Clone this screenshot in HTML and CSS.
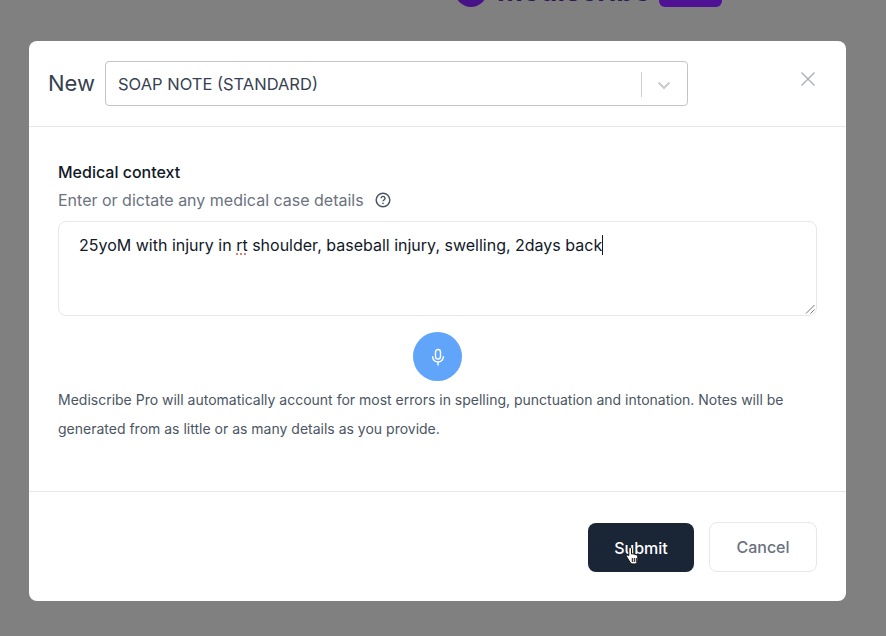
FILE: index.html
```html
<!DOCTYPE html>
<html lang="en">
<head>
<meta charset="utf-8">
<title>Mediscribe Pro</title>
<link rel="stylesheet" href="styles.css">
</head>
<body>
<div class="brand">
  <span class="brand-mark"></span>
  <span class="brand-name">Mediscribe</span>
  <span class="brand-badge">Pro</span>
</div>
<main class="modal">
  <header class="modal-head">
    <span class="new-label">New</span>
    <div class="select">
      <span class="select-value">SOAP NOTE (STANDARD)</span>
      <span class="select-sep"></span>
      <svg class="chevron" viewBox="0 0 20 20" width="20" height="20"><path d="M4.5 7.5 10 13l5.500-5.500" fill="none" stroke="#cccccc" stroke-width="2.200"/></svg>
    </div>
    <svg class="close" viewBox="0 0 16 16" width="16" height="16"><path d="M1.500 1.500l13 13M14.500 1.500l-13 13" fill="none" stroke="#a9adb3" stroke-width="1.400"/></svg>
  </header>
  <section class="modal-body">
    <h2 class="field-title">Medical context</h2>
    <div class="field-hint">
      <span>Enter or dictate any medical case details</span>
      <svg viewBox="0 0 18 18" width="18" height="18"><circle cx="9" cy="9" r="6.800" fill="none" stroke="#4b5563" stroke-width="1.500"/><path d="M7.200 7.300a1.900 1.900 0 1 1 2.900 1.600c-.7.400-1.100.7-1.100 1.400" fill="none" stroke="#4b5563" stroke-width="1.400"/><circle cx="9" cy="12.400" r=".8" fill="#4b5563"/></svg>
    </div>
    <div class="textbox">
      <span class="typed">25yoM with injury in <span class="misspelt">rt</span> shoulder, baseball injury, swelling, 2days back</span><span class="caret"></span>
      <svg class="grip" viewBox="0 0 10 10" width="10" height="10"><path d="M1 9.500 9.500 1M5.500 9.500 9.500 5.500" stroke="#777" stroke-width="1" fill="none"/></svg>
    </div>
    <div class="mic-row">
      <span class="mic">
        <svg viewBox="0 0 24 24" width="20" height="20" fill="none" stroke="#fff" stroke-width="1.700" stroke-linecap="round"><rect x="9" y="3" width="6" height="11.500" rx="3"/><path d="M5.500 11.500a6.500 6.500 0 0 0 13 0M12 18v3.500"/></svg>
      </span>
    </div>
    <p class="note">Mediscribe Pro will automatically account for most errors in spelling, punctuation and intonation. Notes will be generated from as little or as many details as you provide.</p>
  </section>
  <footer class="modal-foot">
    <button class="btn btn-primary">Submit
      <svg class="cursor" viewBox="0 0 16 20" width="16" height="20"><path d="M5 1.500c1 0 1.500.7 1.500 1.500v5l1-.2 1 .2 1.200.3 1.300.4c1.200.4 1.800 1 1.800 2.300v3c0 2-1.300 4-3.500 4H8c-1.500 0-2.300-.7-3-1.800L1.800 11c-.5-.8-.3-1.500.3-1.900.6-.3 1.200-.1 1.700.5V3c0-.8.400-1.500 1.200-1.500z" fill="#fff" stroke="#111" stroke-width="1"/><path d="M7.300 12v4M9.300 12v4M11.300 12v4" stroke="#111" stroke-width="1"/></svg>
    </button>
    <button class="btn btn-ghost">Cancel</button>
  </footer>
</main>
</body>
</html>
```
FILE: styles.css
```css
* { box-sizing: border-box; }
html, body { margin: 0; height: 636px; overflow: hidden; }
body {
  background: #808080;
  font-family: Inter, "Liberation Sans", sans-serif;
  color: #1f2937;
  padding: 41px 40px 35px 29px;
  position: relative;
}
.brand {
  position: absolute;
  left: 455px;
  top: -26px;
  height: 33px;
  display: flex;
  align-items: center;
  gap: 10px;
}
.brand-mark {
  width: 32px;
  height: 32px;
  border-radius: 50%;
  background: linear-gradient(135deg, #3a1a78, #4c0f8f);
}
.brand-name {
  font-size: 28px;
  font-weight: 700;
  color: #2c1a55;
  line-height: 1;
}
.brand-badge {
  background: #4f1295;
  color: #2d1458;
  font-size: 24px;
  font-weight: 700;
  border-radius: 6px;
  padding: 0 12px;
  line-height: 32px;
  height: 32px;
  margin-left: -2px;
}
.modal {
  width: 817px;
  height: 560px;
  background: #fff;
  border-radius: 8px;
  display: flex;
  flex-direction: column;
}
.modal-head {
  height: 86px;
  flex: none;
  display: flex;
  align-items: flex-start;
  padding: 20px 30px 0 19px;
  border-bottom: 1px solid #e5e7eb;
}
.new-label {
  font-size: 22px;
  line-height: 44px;
  color: #374151;
  width: 57px;
  flex: none;
}
.select {
  width: 583px;
  height: 45px;
  flex: none;
  border: 1px solid #c4c4c4;
  border-radius: 4px;
  display: flex;
  align-items: center;
  padding-left: 12px;
}
.select-value {
  flex: 1;
  font-size: 16.500px;
  color: #374151;
}
.select-sep {
  width: 1px;
  height: 25px;
  background: #cccccc;
  margin-top: 1px;
}
.chevron { margin: 3px 13px 0 12px; flex: none; }
.close { margin: 10px 0 0 auto; flex: none; }
.modal-body {
  flex: 1;
  padding: 35px 29px 0;
}
.field-title {
  margin: 0;
  font-size: 16px;
  font-weight: 500;
  line-height: 20px;
  color: #111827;
}
.field-hint {
  display: flex;
  align-items: center;
  gap: 10px;
  margin-top: 6px;
  font-size: 16px;
  line-height: 24px;
  color: #6b7280;
}
.textbox {
  position: relative;
  height: 95px;
  margin-top: 9px;
  border: 1px solid #e5e7eb;
  border-radius: 8px;
  padding: 11px 20px;
  font-size: 16px;
  line-height: 24px;
  color: #111827;
}
.misspelt { text-decoration: underline dotted #d9534f; text-underline-offset: 3px; }
.caret {
  display: inline-block;
  width: 1px;
  height: 20px;
  background: #111827;
  vertical-align: -4px;
}
.grip { position: absolute; right: 1px; bottom: 1px; }
.mic-row {
  display: flex;
  justify-content: center;
  margin-top: 16px;
}
.mic {
  width: 49px;
  height: 49px;
  border-radius: 50%;
  background: #60a5fa;
  display: flex;
  align-items: center;
  justify-content: center;
}
.note {
  margin: 4px 0 0;
  font-size: 14px;
  line-height: 29px;
  color: #4b5563;
}
.modal-foot {
  height: 110px;
  flex: none;
  border-top: 1px solid #e5e7eb;
  display: flex;
  justify-content: flex-end;
  align-items: flex-start;
  gap: 15px;
  padding: 30px 29px 0;
}
.btn {
  font-family: inherit;
  font-size: 16px;
  font-weight: 500;
  height: 50px;
  border-radius: 8px;
  padding: 0;
}
.btn-primary {
  position: relative;
  width: 106px;
  height: 49px;
  margin-top: 1px;
  background: #1a2536;
  border: 0;
  color: #fff;
}
.btn-ghost {
  width: 108px;
  background: #fff;
  border: 1px solid #e5e7eb;
  color: #6b7280;
}
.cursor { position: absolute; left: 37px; top: 23px; }
```
